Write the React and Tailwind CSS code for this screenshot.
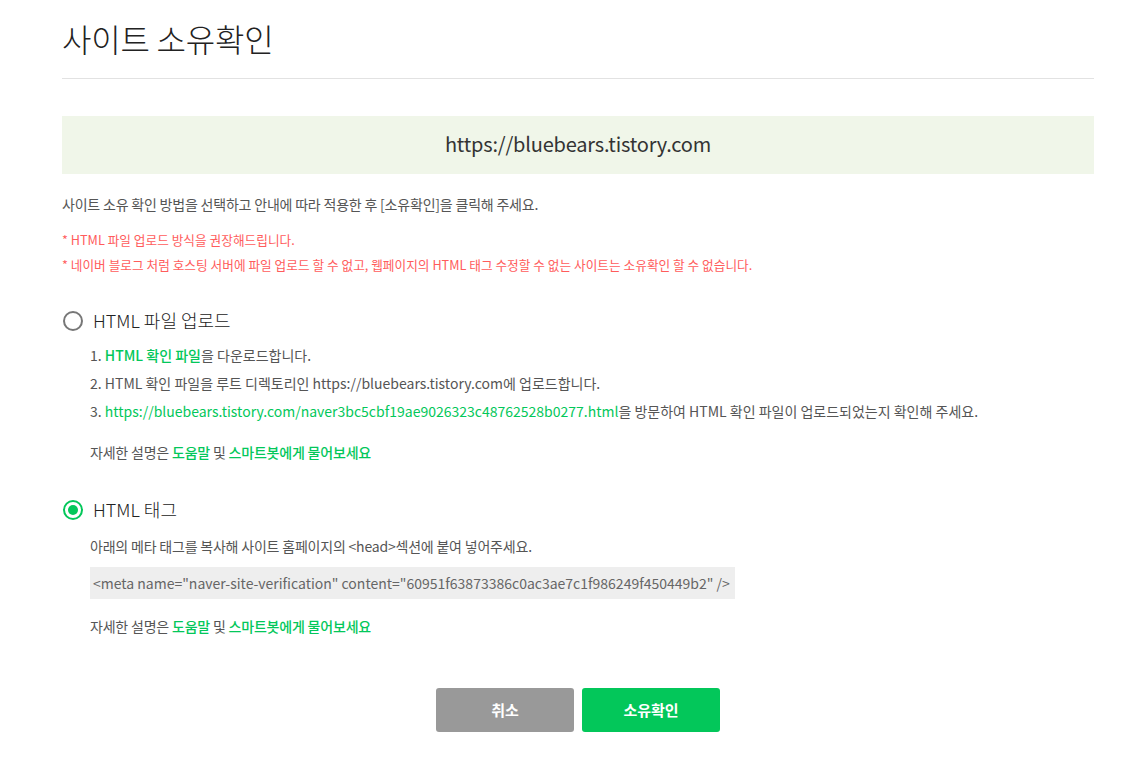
import React, { useState } from 'react';

const FONT = { fontFamily: '"Noto Sans CJK KR", "Noto Sans", sans-serif' };

const Radio = ({ checked }) => (
  <span
    className={`flex items-center justify-center w-[20px] h-[20px] rounded-full border-2 ${
      checked ? 'border-[#03c75a]' : 'border-[#777]'
    }`}
  >
    {checked && <span className="w-[10px] h-[10px] rounded-full bg-[#03c75a]" />}
  </span>
);

const HelpLine = () => (
  <p className="text-[14px] leading-[21px] text-[#555] tracking-[-0.2px]">
    자세한 설명은 <a className="text-[#03c75a] font-medium">도움말</a> 및{' '}
    <a className="text-[#03c75a] font-medium">스마트봇에게 물어보세요</a>
  </p>
);

const App = () => {
  const [method, setMethod] = useState('tag');
  const site = 'https://bluebears.tistory.com';

  return (
    <div className="min-h-screen bg-white" style={FONT}>
      <div className="ml-[62px] w-[1032px]">
        {/* Header */}
        <div className="h-[79px] border-b border-[#e2e2e2] flex items-center">
          <h1 className="text-[32px] font-light text-[#222] tracking-[-0.2px] -mt-[2px]">사이트 소유확인</h1>
        </div>

        {/* Site url */}
        <div className="mt-[37px] h-[58px] bg-[#f0f6e9] flex items-center justify-center">
          <span className="text-[20px] text-[#333] tracking-[-0.2px] -mt-[2px]">{site}</span>
        </div>

        {/* Guide */}
        <p className="mt-[20px] text-[14px] leading-[21px] text-[#555] tracking-[-0.2px]">
          사이트 소유 확인 방법을 선택하고 안내에 따라 적용한 후 [소유확인]을 클릭해 주세요.
        </p>
        <div className="mt-[15px] flex flex-col gap-[6px] text-[12.7px] leading-[19px] text-[#ff5c5c]">
          <p>* HTML 파일 업로드 방식을 권장해드립니다.</p>
          <p>* 네이버 블로그 처럼 호스팅 서버에 파일 업로드 할 수 없고, 웹페이지의 HTML 태그 수정할 수 없는 사이트는 소유확인 할 수 없습니다.</p>
        </div>

        {/* HTML file upload */}
        <button
          onClick={() => setMethod('file')}
          className="mt-[33px] flex items-center gap-[10px] ml-[1px]"
        >
          <Radio checked={method === 'file'} />
          <span className="text-[18px] leading-[27px] font-light text-[#222]">HTML 파일 업로드</span>
        </button>
        <div className="ml-[28px] mt-[11px] flex flex-col gap-[7px] text-[14px] leading-[21px] text-[#555]">
          <p>
            1. <a className="text-[#03c75a] font-medium">HTML 확인 파일</a>을 다운로드합니다.
          </p>
          <p>2. HTML 확인 파일을 루트 디렉토리인 {site}에 업로드합니다.</p>
          <p>
            3. <a className="text-[#03c75a]">{site}/naver3bc5cbf19ae9026323c48762528b0277.html</a>을 방문하여 HTML 확인 파일이 업로드되었는지 확인해 주세요.
          </p>
          <div className="mt-[13px]">
            <HelpLine />
          </div>
        </div>

        {/* HTML tag */}
        <button
          onClick={() => setMethod('tag')}
          className="mt-[33px] flex items-center gap-[10px] ml-[1px]"
        >
          <Radio checked={method === 'tag'} />
          <span className="text-[18px] leading-[27px] font-light text-[#222]">HTML 태그</span>
        </button>
        <div className="ml-[28px] mt-[13px]">
          <p className="text-[14px] leading-[21px] text-[#555] tracking-[-0.2px]">
            아래의 메타 태그를 복사해 사이트 홈페이지의 &lt;head&gt;섹션에 붙여 넣어주세요.
          </p>
          <div className="mt-[10px] w-[645px] h-[32px] bg-[#eeeeee] flex items-center px-[3px]">
            <span className="text-[14px] text-[#666] whitespace-nowrap">
              &lt;meta name="naver-site-verification" content="60951f63873386c0ac3ae7c1f986249f450449b2" /&gt;
            </span>
          </div>
          <div className="mt-[17px]">
            <HelpLine />
          </div>
        </div>

        {/* Buttons */}
        <div className="mt-[51px] flex justify-center gap-[8px] pb-[40px]">
          <button className="w-[138px] h-[44px] rounded-[3px] bg-[#999] text-white text-[15px] font-bold">
            취소
          </button>
          <button className="w-[138px] h-[44px] rounded-[3px] bg-[#03c75a] text-white text-[15px] font-bold">
            소유확인
          </button>
        </div>
      </div>
    </div>
  );
};

export default App;
